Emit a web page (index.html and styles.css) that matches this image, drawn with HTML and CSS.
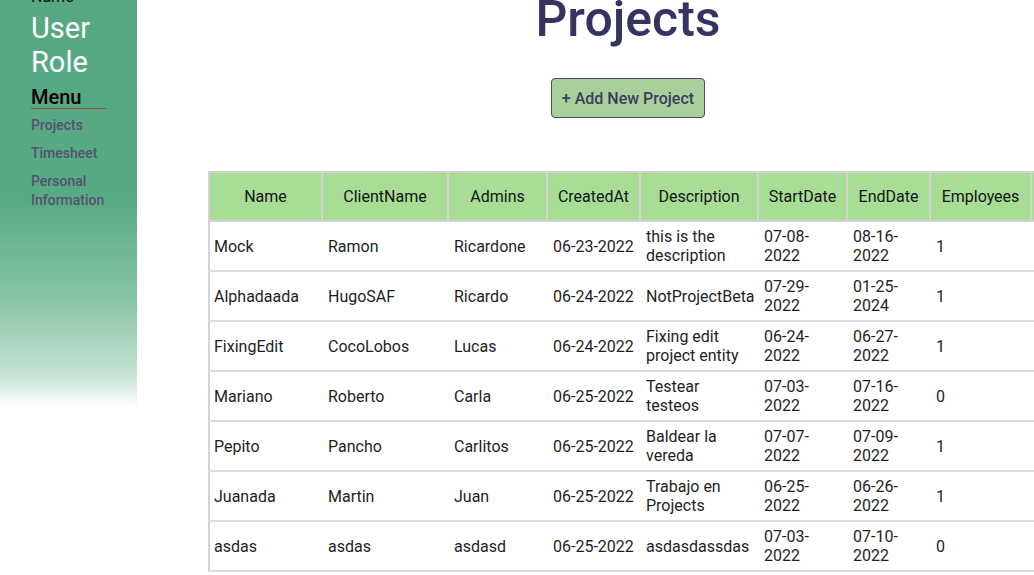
FILE: index.html
```html
<!DOCTYPE html>
<html lang="en">
<head>
<meta charset="utf-8">
<title>Projects</title>
<link rel="stylesheet" href="styles.css">
</head>
<body>
<div class="page">
  <aside class="sidebar">
    <p class="user-name">Name</p>
    <h2 class="user-role">User Role</h2>
    <h3 class="menu-title">Menu</h3>
    <nav class="menu">
      <a class="menu-link" href="#">Projects</a>
      <a class="menu-link" href="#">Timesheet</a>
      <a class="menu-link" href="#">Personal Information</a>
    </nav>
  </aside>
  <main class="content">
    <div class="header">
      <h1 class="title">Projects</h1>
      <button class="add-btn" type="button">+ Add New Project</button>
    </div>
    <table class="projects">
      <colgroup>
        <col class="c1"><col class="c2"><col class="c3"><col class="c4"><col class="c5"><col class="c6"><col class="c7"><col class="c8"><col class="c9">
      </colgroup>
      <thead>
        <tr><th>Name</th><th>ClientName</th><th>Admins</th><th>CreatedAt</th><th>Description</th><th>StartDate</th><th>EndDate</th><th>Employees</th><th>Actions</th></tr>
      </thead>
      <tbody>
        <tr><td>Mock</td><td>Ramon</td><td>Ricardone</td><td>06-23-2022</td><td>this is the description</td><td>07-08-2022</td><td>08-16-2022</td><td>1</td><td></td></tr>
        <tr><td>Alphadaada</td><td>HugoSAF</td><td>Ricardo</td><td>06-24-2022</td><td>NotProjectBeta</td><td>07-29-2022</td><td>01-25-2024</td><td>1</td><td></td></tr>
        <tr><td>FixingEdit</td><td>CocoLobos</td><td>Lucas</td><td>06-24-2022</td><td>Fixing edit project entity</td><td>06-24-2022</td><td>06-27-2022</td><td>1</td><td></td></tr>
        <tr><td>Mariano</td><td>Roberto</td><td>Carla</td><td>06-25-2022</td><td>Testear testeos</td><td>07-03-2022</td><td>07-16-2022</td><td>0</td><td></td></tr>
        <tr><td>Pepito</td><td>Pancho</td><td>Carlitos</td><td>06-25-2022</td><td>Baldear la vereda</td><td>07-07-2022</td><td>07-09-2022</td><td>1</td><td></td></tr>
        <tr><td>Juanada</td><td>Martin</td><td>Juan</td><td>06-25-2022</td><td>Trabajo en Projects</td><td>06-25-2022</td><td>06-26-2022</td><td>1</td><td></td></tr>
        <tr><td>asdas</td><td>asdas</td><td>asdasd</td><td>06-25-2022</td><td>asdasdassdas</td><td>07-03-2022</td><td>07-10-2022</td><td>0</td><td></td></tr>
      </tbody>
    </table>
  </main>
</div>
</body>
</html>
```

FILE: styles.css
```css
html, body {
  margin: 0;
  padding: 0;
  background: #ffffff;
  overflow: hidden;
}

body {
  font-family: Roboto, "Liberation Sans", sans-serif;
  color: #222222;
}

.page {
  display: flex;
  align-items: flex-start;
  margin-top: -20px;
}

/* Sidebar */
.sidebar {
  flex: 0 0 137px;
  width: 137px;
  height: 427px;
  box-sizing: border-box;
  padding: 7px 31px 0 31px;
  background: linear-gradient(to bottom,
    #55a881 0%,
    #57aa83 51%,
    #88c4a7 75%,
    #c9e4d6 93%,
    #ffffff 100%);
}

.user-name {
  margin: 0;
  font-size: 16px;
  line-height: 19px;
  color: #111111;
}

.user-role {
  margin: 5px 0 0 0;
  font-size: 29px;
  line-height: 34px;
  font-weight: 400;
  color: #ffffff;
}

.menu-title {
  margin: 7px 0 0 0;
  font-size: 20px;
  line-height: 22px;
  font-weight: 500;
  color: #000000;
  border-bottom: 1px solid #9a4a45;
}

.menu {
  display: flex;
  flex-direction: column;
  gap: 9px;
  margin-top: 7px;
}

.menu-link {
  font-size: 14px;
  line-height: 19px;
  font-weight: 500;
  color: #55516f;
  text-decoration: none;
}

/* Main */
.content {
  flex: 0 0 auto;
  padding: 11px 0 0 71px;
}

.header {
  width: 840px;
  display: flex;
  flex-direction: column;
  align-items: center;
}

.title {
  margin: 0;
  font-size: 50px;
  line-height: 57px;
  font-weight: 500;
  color: #35335f;
}

.add-btn {
  margin-top: 30px;
  height: 40px;
  padding: 0 10px;
  background: #a9cf9b;
  border: 1px solid #4b4a6b;
  border-radius: 4px;
  font-family: Roboto, "Liberation Sans", sans-serif;
  font-size: 16px;
  font-weight: 500;
  color: #3d3c5f;
}

/* Table */
.projects {
  margin-top: 53px;
  border-collapse: separate;
  border-spacing: 0;
  table-layout: fixed;
  width: 974px;
  font-size: 16px;
}

.c1 { width: 115px; }
.c2 { width: 126px; }
.c3 { width: 99px; }
.c4 { width: 93px; }
.c5 { width: 118px; }
.c6 { width: 89px; }
.c7 { width: 83px; }
.c8 { width: 101px; }
.c9 { width: 150px; }

.projects tr {
  height: 50px;
}

.projects thead tr {
  height: 51px;
}

.projects th {
  background: #a8dd96;
  font-weight: 400;
  color: #141414;
  text-align: center;
  vertical-align: middle;
  padding: 0 4px;
  border-top: 2px solid #d3d3d3;
  border-bottom: 2px solid #d3d3d3;
  border-right: 2px solid #d3d3d3;
}

.projects td {
  text-align: left;
  vertical-align: middle;
  padding: 0 6px 0 5px;
  line-height: 19px;
  color: #1e1e24;
  border-bottom: 2px solid #dcdcdc;
}

.projects th:first-child,
.projects td:first-child {
  border-left: 2px solid #d3d3d3;
}

.projects td:first-child {
  padding-left: 4px;
}
```
